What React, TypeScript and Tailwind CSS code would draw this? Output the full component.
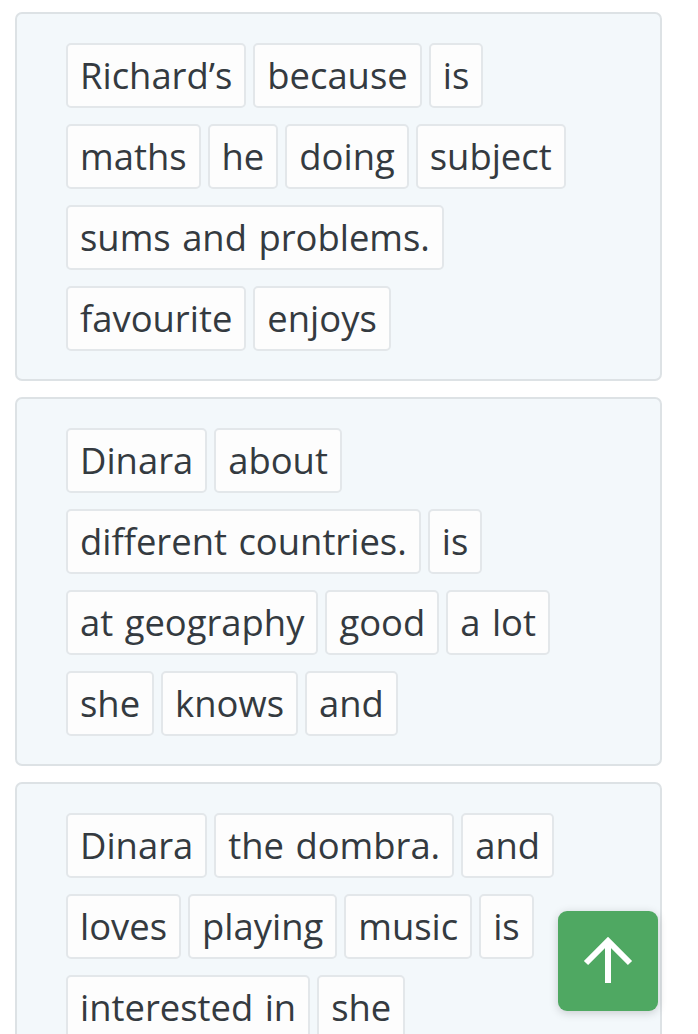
import React from "react";

const cards = [
  [
    ["Richard’s", "because", "is"],
    ["maths", "he", "doing", "subject"],
    ["sums and problems."],
    ["favourite", "enjoys"],
  ],
  [
    ["Dinara", "about"],
    ["different countries.", "is"],
    ["at geography", "good", "a lot"],
    ["she", "knows", "and"],
  ],
  [
    ["Dinara", "the dombra.", "and"],
    ["loves", "playing", "music", "is"],
    ["interested in", "she"],
  ],
];

function Chip({ word }: { word: string }) {
  return (
    <div className="h-[65px] px-[12px] flex items-center bg-[#fdfdfd] border-2 border-[#e3e7ea] rounded-[5px] text-[36.4px] leading-none [word-spacing:2px] text-[#343a40] whitespace-nowrap">
      {word}
    </div>
  );
}

export default function App() {
  return (
    <div
      className="relative w-[698px] h-[1034px] overflow-hidden bg-white"
      style={{ fontFamily: '"Open Sans", "Noto Sans", sans-serif' }}
    >
      <div className="flex flex-col gap-[16px] pt-[12px] pl-[15px]">
        {cards.map((rows, i) => (
          <div
            key={i}
            className="w-[647px] bg-[#f3f8fb] border-2 border-[#dde2e5] rounded-[7px] pl-[49px] pt-[29px] pb-[28px] flex flex-col gap-[16px]"
          >
            {rows.map((row, j) => (
              <div key={j} className="flex gap-[7px]">
                {row.map((w, k) => (
                  <Chip key={k} word={w} />
                ))}
              </div>
            ))}
          </div>
        ))}
      </div>
      <button className="absolute left-[558px] top-[911px] w-[100px] h-[100px] rounded-[9px] bg-[#4fa862] shadow-[0_2px_10px_rgba(0,0,0,0.18)] flex items-center justify-center">
        <svg width="56" height="56" viewBox="0 0 56 56" fill="none" stroke="white" strokeWidth="6" strokeLinecap="butt">
          <path d="M28 50V8" />
          <path d="M6 30L28 8L50 30" />
        </svg>
      </button>
    </div>
  );
}
